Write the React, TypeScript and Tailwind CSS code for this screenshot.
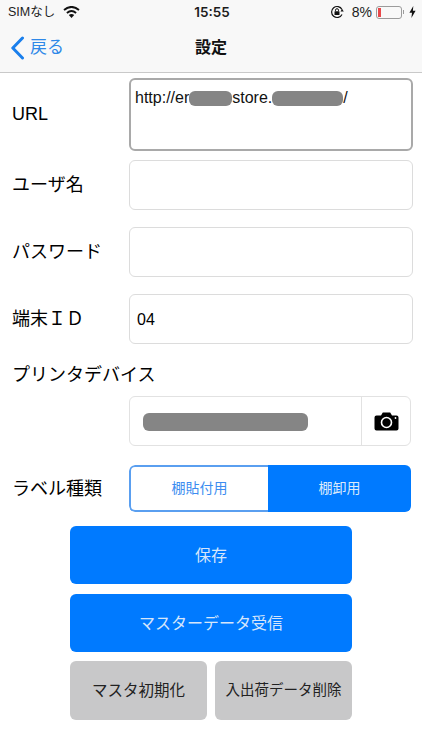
const font = { fontFamily: '"Liberation Sans", "Noto Sans CJK JP", sans-serif' };

function Row({ label, children, className, labelClass = "" }: { label: string; children: React.ReactNode; className: string; labelClass?: string }) {
  return (
    <div className={`flex items-center ${className}`}>
      <div className={`w-[129px] pl-3 text-[18px] leading-6 text-black ${labelClass}`}>{label}</div>
      {children}
    </div>
  );
}

function Field({ value }: { value?: string }) {
  return (
    <div className="h-[50px] w-[284px] rounded-md border border-[#dcdcdc] bg-white px-[7px] text-[16px] leading-[50px] text-black">
      {value}
    </div>
  );
}

function Blur({ className }: { className: string }) {
  return <span className={`inline-block rounded-[6px] bg-[#858585] align-middle ${className}`} />;
}

function StatusBar() {
  return (
    <div className="flex h-6 items-center justify-between pl-2 pr-[6px] text-[13px] text-[#1c1c1c]">
      <div className="flex w-[140px] items-center gap-2">
        <span className="text-[12.5px]">SIMなし</span>
        <svg width="17" height="12" viewBox="0 0 17 12">
          <path d="M8.5 12 L5.8 8.9 Q8.5 6.9 11.2 8.9 Z" fill="#111" />
          <path d="M3.9 6.9 Q8.5 3.1 13.1 6.9" fill="none" stroke="#111" strokeWidth="1.9" />
          <path d="M1 3.9 Q8.5 -2.1 16 3.9" fill="none" stroke="#111" strokeWidth="1.9" />
        </svg>
      </div>
      <span className="font-['Inter'] text-[13.5px] font-semibold">15:55</span>
      <div className="flex w-[140px] items-center justify-end">
        <svg width="14" height="14" viewBox="0 0 14 14">
          <path d="M12 9.5 A5.5 5.5 0 1 1 12 4.5" fill="none" stroke="#111" strokeWidth="1.2" />
          <path d="M10.5 6.5 L13.8 6.5 L12.1 4 Z" fill="#111" />
          <rect x="4.5" y="6.2" width="5" height="3.8" rx=".6" fill="#111" />
          <path d="M5.5 6.2 V5.2 A1.5 1.5 0 0 1 8.5 5.2 V6.2" fill="none" stroke="#111" strokeWidth="1" />
        </svg>
        <span className="ml-2 text-[14px]">8%</span>
        <div className="ml-1 flex items-center gap-[1px]">
          <div className="h-[13px] w-[26px] rounded-[3px] border border-[#9b9b9b] p-[1px]">
            <div className="h-full w-[3px] bg-[#e8484a]" />
          </div>
          <div className="h-1 w-[1px] bg-[#9b9b9b]" />
        </div>
        <svg className="ml-[5px]" width="7" height="12" viewBox="0 0 7 12">
          <path d="M4.3 0 L0.4 6.8 H3 L2.4 12 L6.6 4.8 H3.9 Z" fill="#111" />
        </svg>
      </div>
    </div>
  );
}

export default function App() {
  return (
    <div className="h-[750px] w-[422px] overflow-hidden bg-white" style={font}>
      <div className="h-[73px] border-b border-[#c9c9c9] bg-[#f8f8f8]">
        <StatusBar />
        <div className="relative flex h-12 items-center justify-center">
          <div className="absolute left-[10px] top-[12px] flex items-center gap-[5px] text-[#2f88e8]">
            <svg width="15" height="24" viewBox="0 0 15 24">
              <path d="M12.5 2 L2.8 12 L12.5 22" fill="none" stroke="#1a7fec" strokeWidth="3" strokeLinecap="round" strokeLinejoin="round" />
            </svg>
            <span className="text-[17px] leading-6">戻る</span>
          </div>
          <span className="text-[16px] font-bold text-[#111]">設定</span>
        </div>
      </div>

      <Row label="URL" labelClass="pb-[2px]" className="mt-[5px]">
        <div className="h-[73px] w-[284px] rounded-md border-2 border-[#a9a9a9] bg-white px-[4px] pt-[6px] text-[16px] leading-6 text-[#111]">
          http://er<Blur className="h-[15px] w-[43px]" />store.<Blur className="h-[15px] w-[71px]" />/
        </div>
      </Row>
      <Row label="ユーザ名" className="mt-[9px]">
        <Field />
      </Row>
      <Row label="パスワード" className="mt-[17px]">
        <Field />
      </Row>
      <Row label="端末ＩＤ" className="mt-[17px]">
        <Field value="04" />
      </Row>

      <div className="mt-[19px] pl-3 text-[18px] leading-6 text-black">プリンタデバイス</div>

      <div className="ml-[129px] mt-[9px] flex h-[50px] w-[282px] items-center rounded-md border border-[#e2e2e2]">
        <div className="flex-1 pl-[13px]">
          <Blur className="block h-[18px] w-[165px]" />
        </div>
        <div className="flex h-full w-[49px] items-center justify-center border-l border-[#e2e2e2]">
          <svg width="25" height="19" viewBox="0 0 25 19">
            <path d="M2.5 3.5 H7 L8.8 0.5 H16.2 L18 3.5 H22.5 A2 2 0 0 1 24.5 5.5 V16.5 A2 2 0 0 1 22.5 18.5 H2.5 A2 2 0 0 1 0.5 16.5 V5.5 A2 2 0 0 1 2.5 3.5 Z" fill="#000" />
            <circle cx="12.5" cy="10.5" r="5" fill="none" stroke="#fff" strokeWidth="1.6" />
            <circle cx="21.5" cy="6" r=".9" fill="#fff" />
          </svg>
        </div>
      </div>

      <Row label="ラベル種類" className="mt-[19px]">
        <div className="flex h-[47px] w-[282px] overflow-hidden rounded-md text-[14px]">
          <div className="flex w-[139px] items-center justify-center rounded-l-md border-2 border-r-0 border-[#5a9ff0] bg-white text-[#3c8df0]">棚貼付用</div>
          <div className="flex flex-1 items-center justify-center bg-[#007aff] text-[#dbe9fb]">棚卸用</div>
        </div>
      </Row>

      <div className="ml-[70px] mt-[14px] flex w-[282px] flex-col gap-[10px]">
        <div className="flex h-[58px] items-center justify-center rounded-md bg-[#007aff] pt-px text-[16px] text-[#d6e6fb]">保存</div>
        <div className="flex h-[58px] items-center justify-center rounded-md bg-[#007aff] pt-px text-[16px] text-[#d6e6fb]">マスターデータ受信</div>
        <div className="-mt-[1px] flex gap-2">
          <div className="flex h-[59px] w-[137px] items-center justify-center rounded-md bg-[#c8c8c9] text-[15.5px] text-[#222]">マスタ初期化</div>
          <div className="flex h-[59px] w-[137px] items-center justify-center whitespace-nowrap rounded-md bg-[#c8c8c9] text-[14.5px] text-[#222]">入出荷データ削除</div>
        </div>
      </div>
    </div>
  );
}
